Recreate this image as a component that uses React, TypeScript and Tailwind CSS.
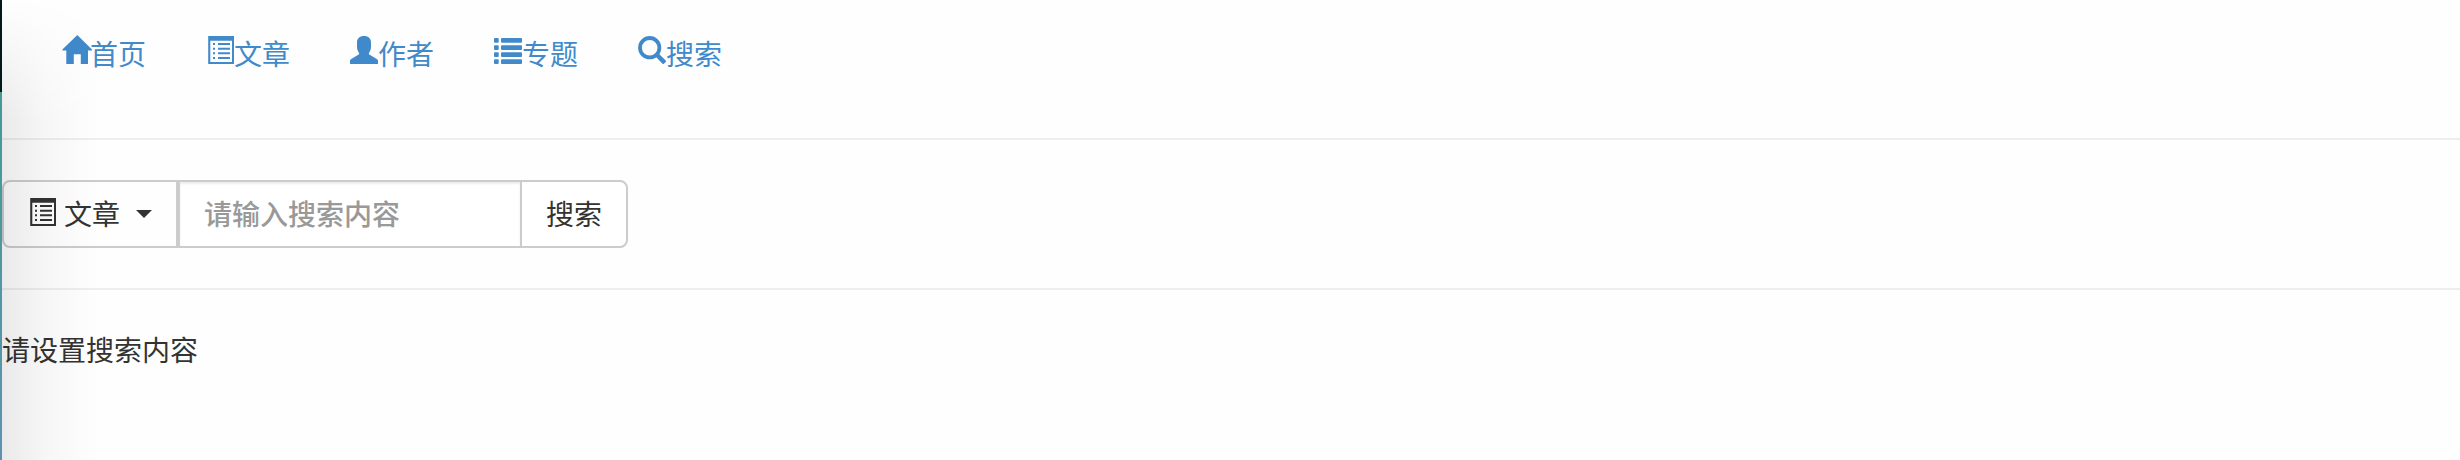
import React, { useState } from "react";

type IconProps = { className?: string };

function Glyph({ className = "", children }: IconProps & { children: React.ReactNode }) {
  return (
    <svg
      viewBox="0 0 28 28"
      fill="currentColor"
      aria-hidden="true"
      className={`size-7 shrink-0 overflow-visible ${className}`}
    >
      {children}
    </svg>
  );
}

function HomeIcon(props: IconProps) {
  return (
    <Glyph {...props}>
      <path d="M15.3-1 30 13.6v.8h-4V28h-7.2v-9.7h-7V28H4.3V14.4H.4v-.8z" />
    </Glyph>
  );
}

function ListAltIcon(props: IconProps) {
  return (
    <Glyph {...props}>
      <path
        fillRule="evenodd"
        d="M2.2 0H28v28H2.2zM4.3 4.7V26H26V4.7zM7 7h2v2H7zm5 0h12v2H12zm-5 4.7h2v2H7zm5 0h12v2H12zm-5 4.6h2v2H7zm5 0h12v2H12zM7 21h2v2H7zm5 0h12v2H12z"
      />
    </Glyph>
  );
}

function UserIcon(props: IconProps) {
  return (
    <Glyph {...props}>
      <path d="M14 0c4.4 0 7 2.6 7 6.4v4.4c0 2.6-.9 4.9-2.1 6.2v1.2L26.7 23c.9.6 1.3 1 1.3 1.900V28H0v-3.1c0-.9.4-1.3 1.3-1.9l7.800-4.800V17C7.900 15.700 7 13.400 7 10.800V6.400C7 2.600 9.600 0 14 0z" />
    </Glyph>
  );
}

function ListIcon(props: IconProps) {
  return (
    <Glyph {...props}>
      {[2, 9.2, 16.2, 23.3].map((y) => (
        <g key={y}>
          <rect x="0" y={y} width="4.7" height="4.7" rx="1" />
          <rect x="7" y={y} width="21" height="4.7" rx="1" />
        </g>
      ))}
    </Glyph>
  );
}

function SearchIcon(props: IconProps) {
  return (
    <Glyph {...props}>
      <circle cx="11.7" cy="11.7" r="9.7" fill="none" stroke="currentColor" strokeWidth="3.8" />
      <path d="M17.5 20.6 20.6 17.5 27.7 24.5c.5.5.5.9 0 1.4l-1.8 1.8c-.5.5-.9.5-1.4 0z" />
    </Glyph>
  );
}

const links = [
  { label: "首页", href: "#home", Icon: HomeIcon },
  { label: "文章", href: "#articles", Icon: ListAltIcon },
  { label: "作者", href: "#authors", Icon: UserIcon },
  { label: "专题", href: "#topics", Icon: ListIcon },
  { label: "搜索", href: "#search", Icon: SearchIcon },
];

export default function App() {
  const [query, setQuery] = useState("");

  return (
    <div className="relative flex min-h-screen bg-[#fefefe] font-['Noto_Sans_CJK_SC',sans-serif] text-[28px] leading-10 text-[#333]">
      <div className="flex w-0.5 shrink-0 flex-col" aria-hidden="true">
        <div className="h-[92px] bg-[#04181b]" />
        <div className="grow bg-linear-to-b from-[#439a94] to-[#5d92b0]" />
      </div>
      <div
        className="pointer-events-none absolute inset-y-0 left-0.5 w-24 bg-linear-to-r from-black/8 via-black/3 via-45% to-transparent mask-[linear-gradient(to_bottom,transparent,black_120px)]"
        aria-hidden="true"
      />

      <div className="min-w-0 grow">
        <nav className="pl-[30px]">
          <ul className="flex">
            {links.map(({ label, href, Icon }) => (
              <li key={href}>
                <a href={href} className="flex px-[30px] pt-[33px] pb-[65px] text-[#408acc]">
                  <Icon className="mt-[3px]" />
                  {label}
                </a>
              </li>
            ))}
          </ul>
        </nav>
        <hr className="border-t-2 border-[#eee]" />

        <form role="search" className="my-10 flex" onSubmit={(e) => e.preventDefault()}>
          <button
            type="button"
            aria-haspopup="menu"
            className="flex items-center gap-2 rounded-l-lg border-2 border-[#ccc] px-6 pt-[11px] pb-[13px]"
          >
            <ListAltIcon className="-mt-0.5" />
            <span>文章</span>
            <svg viewBox="0 0 16 8" fill="currentColor" aria-hidden="true" className="mt-0.5 ml-2 h-2 w-4">
              <path d="M0 0h16L8 8z" />
            </svg>
          </button>
          <input
            type="text"
            aria-label="请输入搜索内容"
            placeholder="请输入搜索内容"
            value={query}
            onChange={(e) => setQuery(e.target.value)}
            className="w-[344px] border-2 border-[#ccc] bg-white px-6 pt-[11px] pb-[13px] shadow-[inset_0_2px_2px_rgba(0,0,0,0.075)] outline-none placeholder:font-medium placeholder:text-[#999]"
          />
          <button
            type="submit"
            className="-ml-0.5 rounded-r-lg border-2 border-[#ccc] bg-white px-6 pt-[11px] pb-[13px]"
          >
            搜索
          </button>
        </form>
        <hr className="border-t-2 border-[#eee]" />

        <p className="mt-[39px]">请设置搜索内容</p>
      </div>
    </div>
  );
}
